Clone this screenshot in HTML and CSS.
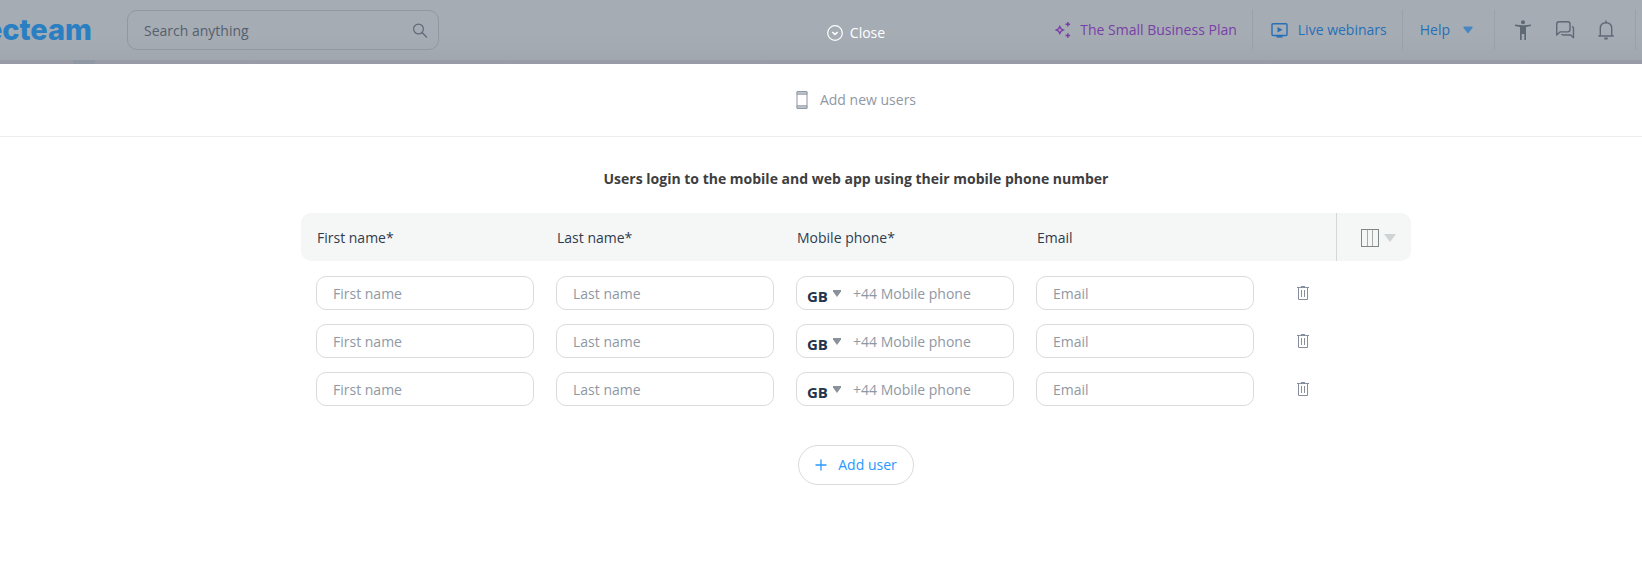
FILE: index.html
```html
<!DOCTYPE html>
<html lang="en">
<head>
<meta charset="utf-8">
<title>Add new users</title>
<link rel="stylesheet" href="styles.css">
</head>
<body>
<div class="page">
  <header class="topbar">
    <span class="logo">ecteam</span>
    <div class="search">
      <input class="search-input" type="text" placeholder="Search anything" aria-label="Search anything">
      <svg class="search-icon" width="16" height="16" viewBox="0 0 16 16" fill="none" stroke="currentColor" stroke-width="1.2"><circle cx="6.500" cy="6" r="4.900"/><path d="M10 9.500l5 5"/></svg>
    </div>
    <nav class="links">
      <a class="link plan" href="#">
        <svg width="16" height="18" viewBox="0 0 16 18" fill="none" stroke="currentColor" stroke-width="1.500"><path d="M4.800 5.500l1.200 2.300L8.300 9l-2.300 1.200-1.200 2.300-1.200-2.300L1.300 9l2.300-1.200z"/><path d="M12.800 1v4.500M10.500 3.200h4.600M12.800 12.200v4.600M10.500 14.500h4.600"/></svg>
        The Small Business Plan
      </a>
      <a class="link" href="#">
        <svg width="18" height="16" viewBox="0 0 18 16" fill="none" stroke="currentColor" stroke-width="1.400"><rect x="1" y="1.700" width="15" height="11.800" rx="1"/><path d="M6.500 5v5.500l5-2.700z" fill="currentColor" stroke="none"/><path d="M5.500 14.600h6" stroke-width="2"/></svg>
        Live webinars
      </a>
      <a class="link help" href="#">Help
        <svg class="help-caret" width="10" height="8" viewBox="0 0 10 8"><path d="M0.500 0.500h9V2L5 7.500.5 2z" fill="currentColor"/></svg>
      </a>
      <div class="tools">
        <button class="tool" type="button" aria-label="Accessibility"><svg width="20" height="20" viewBox="0 0 20 20" fill="currentColor"><circle cx="10" cy="2.200" r="2"/><path d="M2 4.500c5 1 11 1 16 0v1.500c-1.700.4-3.400.7-5 .9V20h-1.700v-6H8.700v6H7V6.900c-1.600-.2-3.300-.5-5-.9z"/></svg></button>
        <button class="tool" type="button" aria-label="Chat"><svg width="20" height="20" viewBox="0 0 20 20" fill="none" stroke="currentColor" stroke-width="1.400" stroke-linejoin="round"><path d="M1.700 15V4.200C1.700 2.700 2.600 1.800 4 1.800h8.700c1.400 0 2.300.9 2.300 2.300v5.500c0 1.400-.9 2.300-2.300 2.300H5z"/><path d="M17 6.300c1 .3 1.500 1 1.500 2v9.400L15.700 15H8.500c-1 0-1.600-.3-2-1"/></svg></button>
        <button class="tool" type="button" aria-label="Notifications"><svg width="18" height="20" viewBox="0 0 18 20" fill="none" stroke="currentColor" stroke-width="1.400"><path d="M1.300 16h15.400M3.300 16V8.500C3.300 5 5.600 2.700 9 2.700s5.700 2.300 5.700 5.800V16M9 2.700V.6"/><path d="M7.300 18.500h3.400" stroke-width="2"/></svg></button>
      </div>
    </nav>
    <div class="close-layer">
      <button class="close" type="button">
        <svg width="16" height="16" viewBox="0 0 16 16" fill="none" stroke="currentColor" stroke-width="1.2"><circle cx="8" cy="8" r="7.3"/><path d="M5.300 7l2.700 2.400L10.700 7" stroke-width="1.500"/></svg>
        Close
      </button>
    </div>
  </header>
  <div class="strip"><span class="strip-tab"></span></div>

  <main class="panel">
    <div class="panel-head">
      <svg width="12" height="18" viewBox="0 0 12 18"><rect x="1" y=".5" width="10" height="17" rx="1" fill="#fff" stroke="#8f969f"/><path d="M1 .5h10v2.800H1zM1 14.700h10v2.800H1z" fill="#bcc2c9" stroke="#8f969f" stroke-width=".8"/></svg>
      <h1 class="panel-title">Add new users</h1>
    </div>
    <p class="intro">Users login to the mobile and web app using their mobile phone number</p>
    <table class="users">
      <thead>
        <tr>
          <th class="field-col">First name*</th>
          <th class="field-col">Last name*</th>
          <th class="field-col">Mobile phone*</th>
          <th class="field-col">Email</th>
          <th class="side-col"></th>
          <th class="side-col columns-cell">
            <button class="columns" type="button" aria-label="Choose columns">
              <svg width="18" height="18" viewBox="0 0 18 18" fill="none"><rect x=".5" y=".5" width="17" height="17" stroke="#7e8786"/><path d="M6.500 1v16M11.500 1v16" stroke="#a5abab"/></svg>
              <svg width="12" height="8" viewBox="0 0 12 8"><path d="M0 0h12L6 8z" fill="#d0d3d3"/></svg>
            </button>
          </th>
        </tr>
      </thead>
      <tbody>
        <tr>
          <td><input class="field" type="text" placeholder="First name" aria-label="First name"></td>
          <td><input class="field" type="text" placeholder="Last name" aria-label="Last name"></td>
          <td><div class="phone"><select class="country" aria-label="Country code"><option>GB</option></select><svg class="phone-caret" width="8" height="7" viewBox="0 0 8 7"><path d="M0 0h8v1.500L4 7 0 1.500z"/></svg><input class="phone-input" type="tel" placeholder="+44 Mobile phone" aria-label="Mobile phone"></div></td>
          <td><input class="field" type="email" placeholder="Email" aria-label="Email"></td>
          <td class="trash-cell"><button class="trash" type="button" aria-label="Delete row"><svg width="12" height="14" viewBox="0 0 12 14" fill="none" stroke="currentColor"><path d="M0 1.500h12M4 .5h4M1.500 1.500v12h9v-12M4.500 4v7M7.500 4v7"/></svg></button></td>
          <td></td>
        </tr>
        <tr>
          <td><input class="field" type="text" placeholder="First name" aria-label="First name"></td>
          <td><input class="field" type="text" placeholder="Last name" aria-label="Last name"></td>
          <td><div class="phone"><select class="country" aria-label="Country code"><option>GB</option></select><svg class="phone-caret" width="8" height="7" viewBox="0 0 8 7"><path d="M0 0h8v1.500L4 7 0 1.500z"/></svg><input class="phone-input" type="tel" placeholder="+44 Mobile phone" aria-label="Mobile phone"></div></td>
          <td><input class="field" type="email" placeholder="Email" aria-label="Email"></td>
          <td class="trash-cell"><button class="trash" type="button" aria-label="Delete row"><svg width="12" height="14" viewBox="0 0 12 14" fill="none" stroke="currentColor"><path d="M0 1.500h12M4 .5h4M1.500 1.500v12h9v-12M4.500 4v7M7.500 4v7"/></svg></button></td>
          <td></td>
        </tr>
        <tr>
          <td><input class="field" type="text" placeholder="First name" aria-label="First name"></td>
          <td><input class="field" type="text" placeholder="Last name" aria-label="Last name"></td>
          <td><div class="phone"><select class="country" aria-label="Country code"><option>GB</option></select><svg class="phone-caret" width="8" height="7" viewBox="0 0 8 7"><path d="M0 0h8v1.500L4 7 0 1.500z"/></svg><input class="phone-input" type="tel" placeholder="+44 Mobile phone" aria-label="Mobile phone"></div></td>
          <td><input class="field" type="email" placeholder="Email" aria-label="Email"></td>
          <td class="trash-cell"><button class="trash" type="button" aria-label="Delete row"><svg width="12" height="14" viewBox="0 0 12 14" fill="none" stroke="currentColor"><path d="M0 1.500h12M4 .5h4M1.500 1.500v12h9v-12M4.500 4v7M7.500 4v7"/></svg></button></td>
          <td></td>
        </tr>
      </tbody>
    </table>
    <button class="add" type="button">
      <svg width="12" height="12" viewBox="0 0 12 12" fill="none" stroke="currentColor" stroke-width="1.300"><path d="M6 .5v11M.5 6h11"/></svg>
      Add user
    </button>
  </main>
</div>
</body>
</html>
```
FILE: styles.css
```css
* { box-sizing: border-box; }

body {
  margin: 0;
  overflow-x: hidden;
  background: #fff;
  color: #2f3c4f;
  font: 14px/20px "Open Sans", "Noto Sans", sans-serif;
}

button, input, select {
  font: inherit;
  color: inherit;
  border: 0;
  padding: 0;
  margin: 0;
  background: none;
}

svg { display: block; flex: none; }

/* Dimmed top bar */
.topbar {
  display: flex;
  align-items: center;
  position: relative;
  height: 60px;
  background: linear-gradient(#a5acb4 60%, #a1a7af);
}

.logo {
  display: flex;
  justify-content: flex-end;
  width: 92px;
  color: #2a7fc2;
  font: 800 29px/32px Inter, "Open Sans", sans-serif;
}

.search {
  display: flex;
  align-items: center;
  width: 312px;
  height: 40px;
  margin-left: 35px;
  padding: 1px 10px 0 16px;
  border: 1px solid #8f98a3;
  border-radius: 10px;
  color: #5f6977;
}

.search-input { flex: 1; min-width: 0; padding-top: 1px; outline: 0; }
.search-input::placeholder { color: #56606c; opacity: 1; }

/* The close button floats over the dimmed bar, centred on the panel */
.close-layer {
  position: absolute;
  inset: 0 -70px 0 0;
  display: flex;
  justify-content: center;
  align-items: center;
  padding-top: 5px;
  pointer-events: none;
}

.close {
  display: flex;
  align-items: center;
  gap: 7px;
  color: #fff;
  pointer-events: auto;
}

.links {
  display: flex;
  align-items: center;
  margin-left: auto;
  padding-right: 6px;
}

.link {
  display: flex;
  align-items: center;
  gap: 9px;
  height: 40px;
  padding: 0 15px 0 18px;
  border-right: 1px solid #9aa1aa;
  color: #2670b8;
  text-decoration: none;
  white-space: nowrap;
}

.plan { color: #7a3fa6; }
.help { gap: 13px; padding: 0 21px 0 17px; }
.help-caret { color: #4a86c0; }

.tools {
  display: flex;
  align-items: center;
  gap: 22px;
  height: 40px;
  padding: 0 20px 0 18px;
  border-right: 1px solid #9aa1aa;
  color: #5f6875;
}

.strip { height: 4px; padding-left: 73px; background: #999ca6; }
.strip-tab { display: block; width: 22px; height: 4px; background: #8e97a3; }

/* The panel is centred on a canvas that runs 70px past the window */
.panel {
  display: flex;
  flex-direction: column;
  align-items: center;
  margin-right: -70px;
}

.panel-head {
  display: flex;
  align-items: center;
  justify-content: center;
  gap: 12px;
  align-self: stretch;
  height: 73px;
  border-bottom: 1px solid #ededee;
}

.panel-title { margin: 0; font-size: 14px; font-weight: 400; color: #8f98a3; }

.intro {
  margin: 32px 0 24px;
  color: #3e3e40;
  font-weight: 700;
}

.users {
  width: 1110px;
  table-layout: fixed;
  border-collapse: separate;
  border-spacing: 0;
}

.users th {
  height: 48px;
  padding: 2px 0 0 16px;
  background: #f5f7f6;
  font-weight: 400;
  text-align: left;
}

.users th:first-child { border-radius: 10px 0 0 10px; }
.users th:last-child { border-radius: 0 10px 10px 0; }
.field-col { width: 240px; }
.side-col { width: 75px; }
.users .columns-cell { padding-left: 24px; border-left: 1px solid #d5d8db; }
.columns { display: flex; align-items: center; gap: 5px; }

.users td { padding: 14px 7px 0 15px; }
.users tr:first-child td { padding-top: 15px; }

.field, .phone {
  display: flex;
  align-items: center;
  width: 100%;
  height: 34px;
  border: 1px solid #dadbde;
  border-radius: 10px;
}

.field { padding: 1px 16px 0; }
.field::placeholder, .phone-input::placeholder { color: #8f98a3; opacity: 1; }

.phone { padding-left: 10px; }

.country {
  width: 21px;
  height: 32px;
  padding-top: 6px;
  appearance: none;
  color: #24344a;
  font-size: 15px;
  font-weight: 700;
}

.phone-caret { margin: 0 12px 0 5px; fill: #8c929b; }
.phone-input { flex: 1; min-width: 0; padding-top: 2px; }

.users .trash-cell { padding-left: 36px; }
.trash { display: block; color: #868f9b; }

.add {
  display: flex;
  align-items: center;
  gap: 11px;
  height: 40px;
  margin-top: 39px;
  padding: 0 16px;
  border: 1px solid #d8dadd;
  border-radius: 20px;
  color: #2998ff;
}
```
